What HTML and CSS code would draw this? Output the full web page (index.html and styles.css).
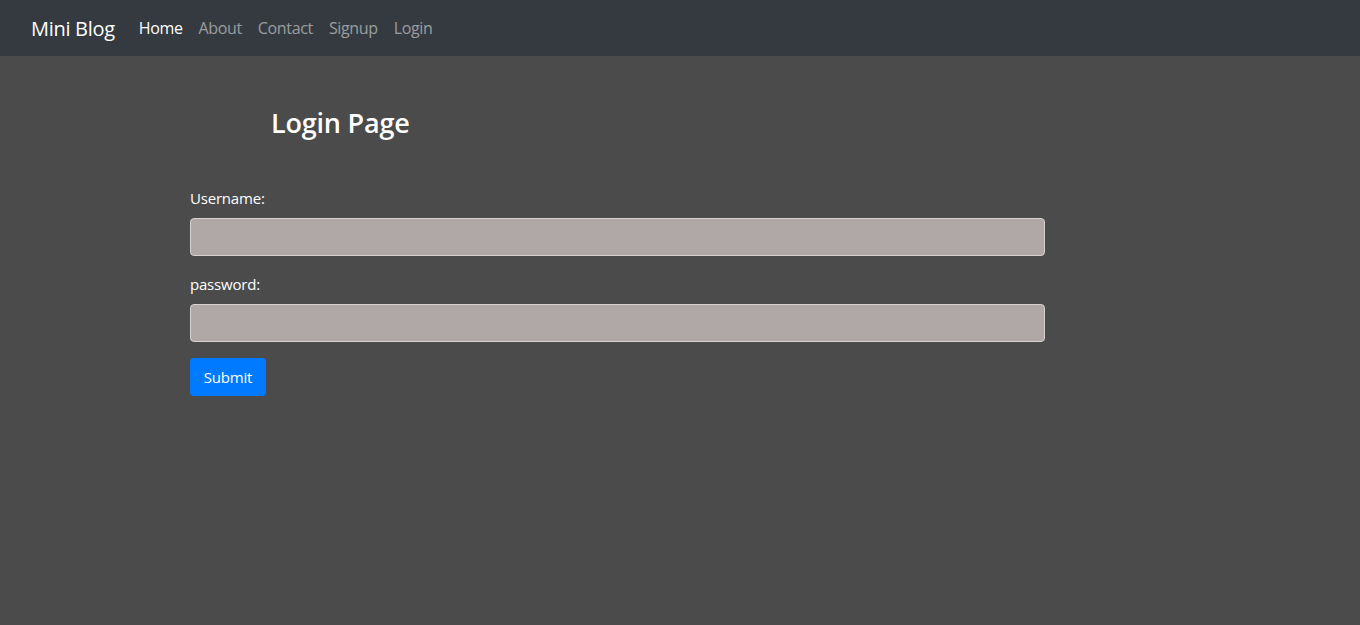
FILE: index.html
```html
<!DOCTYPE html>
<html lang="en">
<head>
<meta charset="utf-8">
<title>Login Page</title>
<link rel="stylesheet" href="styles.css">
</head>
<body>
<nav class="navbar">
  <a class="brand" href="#">Mini Blog</a>
  <ul class="nav">
    <li><a class="nav-link active" href="#">Home</a></li>
    <li><a class="nav-link" href="#">About</a></li>
    <li><a class="nav-link" href="#">Contact</a></li>
    <li><a class="nav-link" href="#">Signup</a></li>
    <li><a class="nav-link" href="#">Login</a></li>
  </ul>
</nav>
<main class="page">
  <h2 class="title">Login Page</h2>
  <form class="login-form">
    <div class="form-group">
      <label class="label" for="username">Username:</label>
      <input class="input" type="text" id="username">
    </div>
    <div class="form-group">
      <label class="label" for="password">password:</label>
      <input class="input" type="password" id="password">
    </div>
    <button class="btn" type="submit">Submit</button>
  </form>
</main>
</body>
</html>
```
FILE: styles.css
```css
* { box-sizing: border-box; }
html, body { margin: 0; padding: 0; }
body {
  background: #4b4b4b;
  font-family: "Open Sans", "Noto Sans", sans-serif;
  font-size: 15px;
  color: #fff;
  min-height: 625px;
}
.navbar {
  height: 56px;
  background: #343a40;
  display: flex;
  align-items: center;
  padding: 0 31px;
}
.brand {
  color: #fff;
  text-decoration: none;
  font-size: 20px;
  margin-right: 16px;
  letter-spacing: -0.3px;
}
.nav {
  list-style: none;
  margin: 0;
  padding: 0;
  display: flex;
}
.nav-link {
  display: block;
  padding: 8px 8px;
  color: rgba(255,255,255,0.5);
  text-decoration: none;
  font-size: 16px;
  letter-spacing: -0.35px;
}
.nav-link.active { color: #fff; }
.page {
  padding: 0 0 0 190px;
  width: 1045px;
}
.title {
  margin: 0;
  padding: 45px 0 0 81px;
  font-size: 27px;
  font-weight: 600;
  line-height: 44px;
  letter-spacing: -0.2px;
}
.login-form { margin-top: 41px; }
.form-group { margin-bottom: 16px; }
.label {
  display: block;
  margin-bottom: 8px;
  line-height: 24px;
  letter-spacing: -0.2px;
}
.input {
  display: block;
  width: 100%;
  height: 38px;
  background: #b0a8a7;
  border: 1px solid #d6d2d2;
  border-radius: 4px;
  font: inherit;
}
.btn {
  display: block;
  height: 38px;
  padding: 0 12px;
  width: 76px;
  background: #007bff;
  color: #fff;
  border: 0;
  border-radius: 4px;
  font: inherit;
  font-size: 15px;
  letter-spacing: -0.2px;
}
```
